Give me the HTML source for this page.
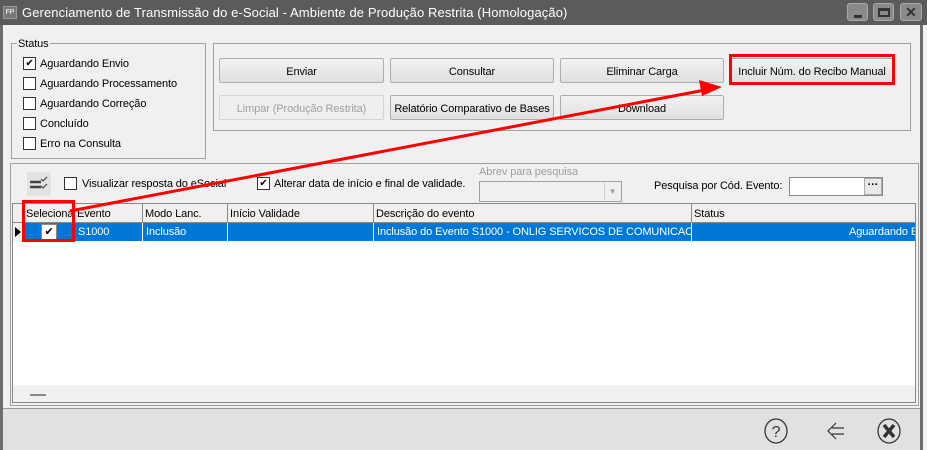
<!DOCTYPE html>
<html><head><meta charset="utf-8"><style>
*{box-sizing:border-box;margin:0;padding:0}
body{width:927px;height:450px;overflow:hidden;background:#f0f0f0;font-family:"Liberation Sans",sans-serif;font-size:11px;color:#000;position:relative;letter-spacing:-0.1px}
.a{position:absolute;white-space:nowrap}
.btn{position:absolute;height:25px;border:1px solid #adadad;border-radius:2px;background:linear-gradient(#f2f2f2,#e0e0e0);text-align:center;line-height:26px;font-size:11px;white-space:nowrap;overflow:hidden}
.cb{position:absolute;width:13px;height:13px;border:1px solid #333;background:#fff;font-size:10px;line-height:11px;text-align:center}
.lbl{position:absolute;font-size:11px;white-space:nowrap}
.th{position:absolute;top:0;height:19px;line-height:20px;border-right:1px solid #888;padding-left:2px;overflow:hidden;white-space:nowrap}
.td{position:absolute;top:0;height:19px;line-height:19px;border-right:1px solid #fff;padding-left:3px;color:#fff;overflow:hidden;white-space:nowrap}
</style></head><body>
<div class="a" style="left:0;top:0;width:927px;height:25px;background:#5b5b59"></div>
<div class="a" style="left:3px;top:6px;width:14px;height:13px;background:#777;border:1px solid #999;color:#fff;font-size:7px;line-height:11px;text-align:center">FP</div>
<div class="a" style="left:22px;top:5px;color:#fff;font-size:13px;letter-spacing:0.1px">Gerenciamento de Transmissão do e-Social - Ambiente de Produção Restrita (Homologação)</div>
<div class="a" style="left:847px;top:3px;width:21px;height:18px;background:#8a8a8a;border-radius:3px;border:1px solid #aaa"><div class="a" style="left:6px;top:11px;width:8px;height:3px;background:#333"></div></div>
<div class="a" style="left:873px;top:3px;width:21px;height:18px;background:#8a8a8a;border-radius:3px;border:1px solid #aaa"><div class="a" style="left:4px;top:4px;width:12px;height:9px;border:2px solid #333;border-top-width:3px"></div></div>
<div class="a" style="left:900px;top:3px;width:22px;height:18px;background:#8a8a8a;border-radius:3px;border:1px solid #aaa;color:#333;font-weight:bold;font-size:14px;line-height:16px;text-align:center">✕</div>
<div class="a" style="left:0;top:25px;width:3px;height:425px;background:#6d6d6d"></div>
<div class="a" style="left:920px;top:25px;width:3px;height:425px;background:#6d6d6d"></div>
<div class="a" style="left:923px;top:25px;width:4px;height:425px;background:#f0f0f0"></div>
<div class="a" style="left:11px;top:43px;width:195px;height:116px;border:1px solid #a0a0a0"></div>
<div class="a" style="left:17px;top:38px;background:#f0f0f0;padding:0 1px">Status</div>
<div class="cb" style="left:23px;top:57px">✔</div><div class="lbl" style="left:40px;top:58px">Aguardando Envio</div>
<div class="cb" style="left:23px;top:77px"></div><div class="lbl" style="left:40px;top:78px">Aguardando Processamento</div>
<div class="cb" style="left:23px;top:97px"></div><div class="lbl" style="left:40px;top:98px">Aguardando Correção</div>
<div class="cb" style="left:23px;top:117px"></div><div class="lbl" style="left:40px;top:118px">Concluído</div>
<div class="cb" style="left:23px;top:137px"></div><div class="lbl" style="left:40px;top:138px">Erro na Consulta</div>
<div class="a" style="left:213px;top:43px;width:698px;height:88px;border:1px solid #a0a0a0"></div>
<div class="btn" style="left:219px;top:58px;width:165px">Enviar</div>
<div class="btn" style="left:390px;top:58px;width:164px">Consultar</div>
<div class="btn" style="left:560px;top:58px;width:164px">Eliminar Carga</div>
<div class="btn" style="left:731px;top:58px;width:162px">Incluir Núm. do Recibo Manual</div>
<div class="btn" style="left:219px;top:95px;width:165px;color:#a0a0a0;background:#efefef;border-color:#d4d4d4">Limpar (Produção Restrita)</div>
<div class="btn" style="left:390px;top:95px;width:164px">Relatório Comparativo de Bases</div>
<div class="btn" style="left:560px;top:95px;width:164px">Download</div>
<div class="a" style="left:10px;top:163px;width:909px;height:243px;border:1px solid #a0a0a0"></div>
<div class="a" style="left:27px;top:172px;width:24px;height:24px;background:#e3e3e3"></div>
<svg class="a" style="left:28px;top:174px" width="22" height="20"><path d="M2 8h11M2 13h11" stroke="#444" stroke-width="2.5"/><path d="M13 5l2 2 4-4M13 12l2 2 4-4" stroke="#555" stroke-width="1.3" fill="none"/></svg>
<div class="cb" style="left:64px;top:177px"></div><div class="lbl" style="left:82px;top:178px">Visualizar resposta do eSocial</div>
<div class="cb" style="left:257px;top:177px">✔</div><div class="lbl" style="left:274px;top:178px">Alterar data de início e final de validade.</div>
<div class="lbl" style="left:479px;top:166px;color:#a0a0a0">Abrev para pesquisa</div>
<div class="a" style="left:479px;top:181px;width:143px;height:21px;border:1px solid #a0a0a0;background:#f0f0f0"><div class="a" style="right:1px;top:1px;width:16px;height:17px;border-left:1px solid #ccc;color:#a0a0a0;font-size:8px;text-align:center;line-height:17px">▼</div></div>
<div class="lbl" style="left:654px;top:180px">Pesquisa por Cód. Evento:</div>
<div class="a" style="left:789px;top:177px;width:94px;height:19px;border:1px solid #888;background:#fff"><div class="a" style="right:0;top:0;width:18px;height:17px;background:#e8e8e8;border:1px solid #aaa;font-weight:bold;text-align:center;line-height:12px">···</div></div>
<div class="a" style="left:12px;top:203px;width:904px;height:200px;background:#fff;border:1px solid #888"></div>
<div class="a" style="left:13px;top:204px;width:902px;height:19px;background:#f0f0f0;border-bottom:1px solid #888">
<div class="th" style="left:0;width:12px"></div>
<div class="th" style="left:12px;width:50px;padding-left:1px">Seleciona</div>
<div class="th" style="left:62px;width:68px">Evento</div>
<div class="th" style="left:130px;width:85px">Modo Lanc.</div>
<div class="th" style="left:215px;width:146px">Início Validade</div>
<div class="th" style="left:361px;width:318px">Descrição do evento</div>
<div class="th" style="left:679px;width:223px;border-right:none">Status</div>
</div>
<div class="a" style="left:13px;top:223px;width:902px;height:18px;background:#0078d7">
<div class="a" style="left:0;top:0;width:12px;height:18px;background:#f0f0f0;border-right:1px solid #888"></div>
<div class="a" style="left:2px;top:4px;width:0;height:0;border-top:5px solid transparent;border-bottom:5px solid transparent;border-left:6px solid #000"></div>
<div class="a" style="left:28px;top:1px;width:16px;height:16px;background:#fff;border:1px solid #888;text-align:center;line-height:14px;font-size:11px">✔</div>
<div class="td" style="left:62px;width:68px">S1000</div>
<div class="td" style="left:130px;width:85px">Inclusão</div>
<div class="td" style="left:215px;width:146px"></div>
<div class="td" style="left:361px;width:318px">Inclusão do Evento S1000 - ONLIG SERVICOS DE COMUNICACAO</div>
<div class="td" style="left:679px;width:223px;border:none"><span class="a" style="left:157px;top:0">Aguardando Envio</span></div>
</div>
<div class="a" style="left:13px;top:385px;width:902px;height:17px;background:#f0f0f0"></div>
<div class="a" style="left:30px;top:394px;width:16px;height:2px;background:#888"></div>
<div class="a" style="left:3px;top:408px;width:917px;height:42px;background:#e1e1e1;border-top:1px solid #999"></div>
<svg class="a" style="left:760px;top:418px" width="160" height="28">
<ellipse cx="16" cy="13" rx="11" ry="12" fill="none" stroke="#333" stroke-width="1.3"/>
<text x="16" y="19" text-anchor="middle" font-family="Liberation Sans" font-size="16" fill="#333">?</text>
<path d="M84 10h-12M84 16h-12M76 5l-8 8 8 8" fill="none" stroke="#333" stroke-width="1.2"/>
<ellipse cx="129" cy="13" rx="11" ry="12" fill="none" stroke="#333" stroke-width="1.3"/>
<path d="M124 7l10 12M134 7l-10 12" stroke="#333" stroke-width="3.5"/>
</svg>
<div class="a" style="left:729px;top:54px;width:166px;height:31px;border:3px solid #f00"></div>
<div class="a" style="left:22px;top:200px;width:53px;height:42px;border:3px solid #f00"></div>
<svg class="a" style="left:0;top:0" width="927" height="450">
<line x1="70" y1="211" x2="705" y2="90" stroke="#f00" stroke-width="3"/>
<path d="M722 87l-23 -7l3 16z" fill="#f00"/>
</svg>
</body></html>
